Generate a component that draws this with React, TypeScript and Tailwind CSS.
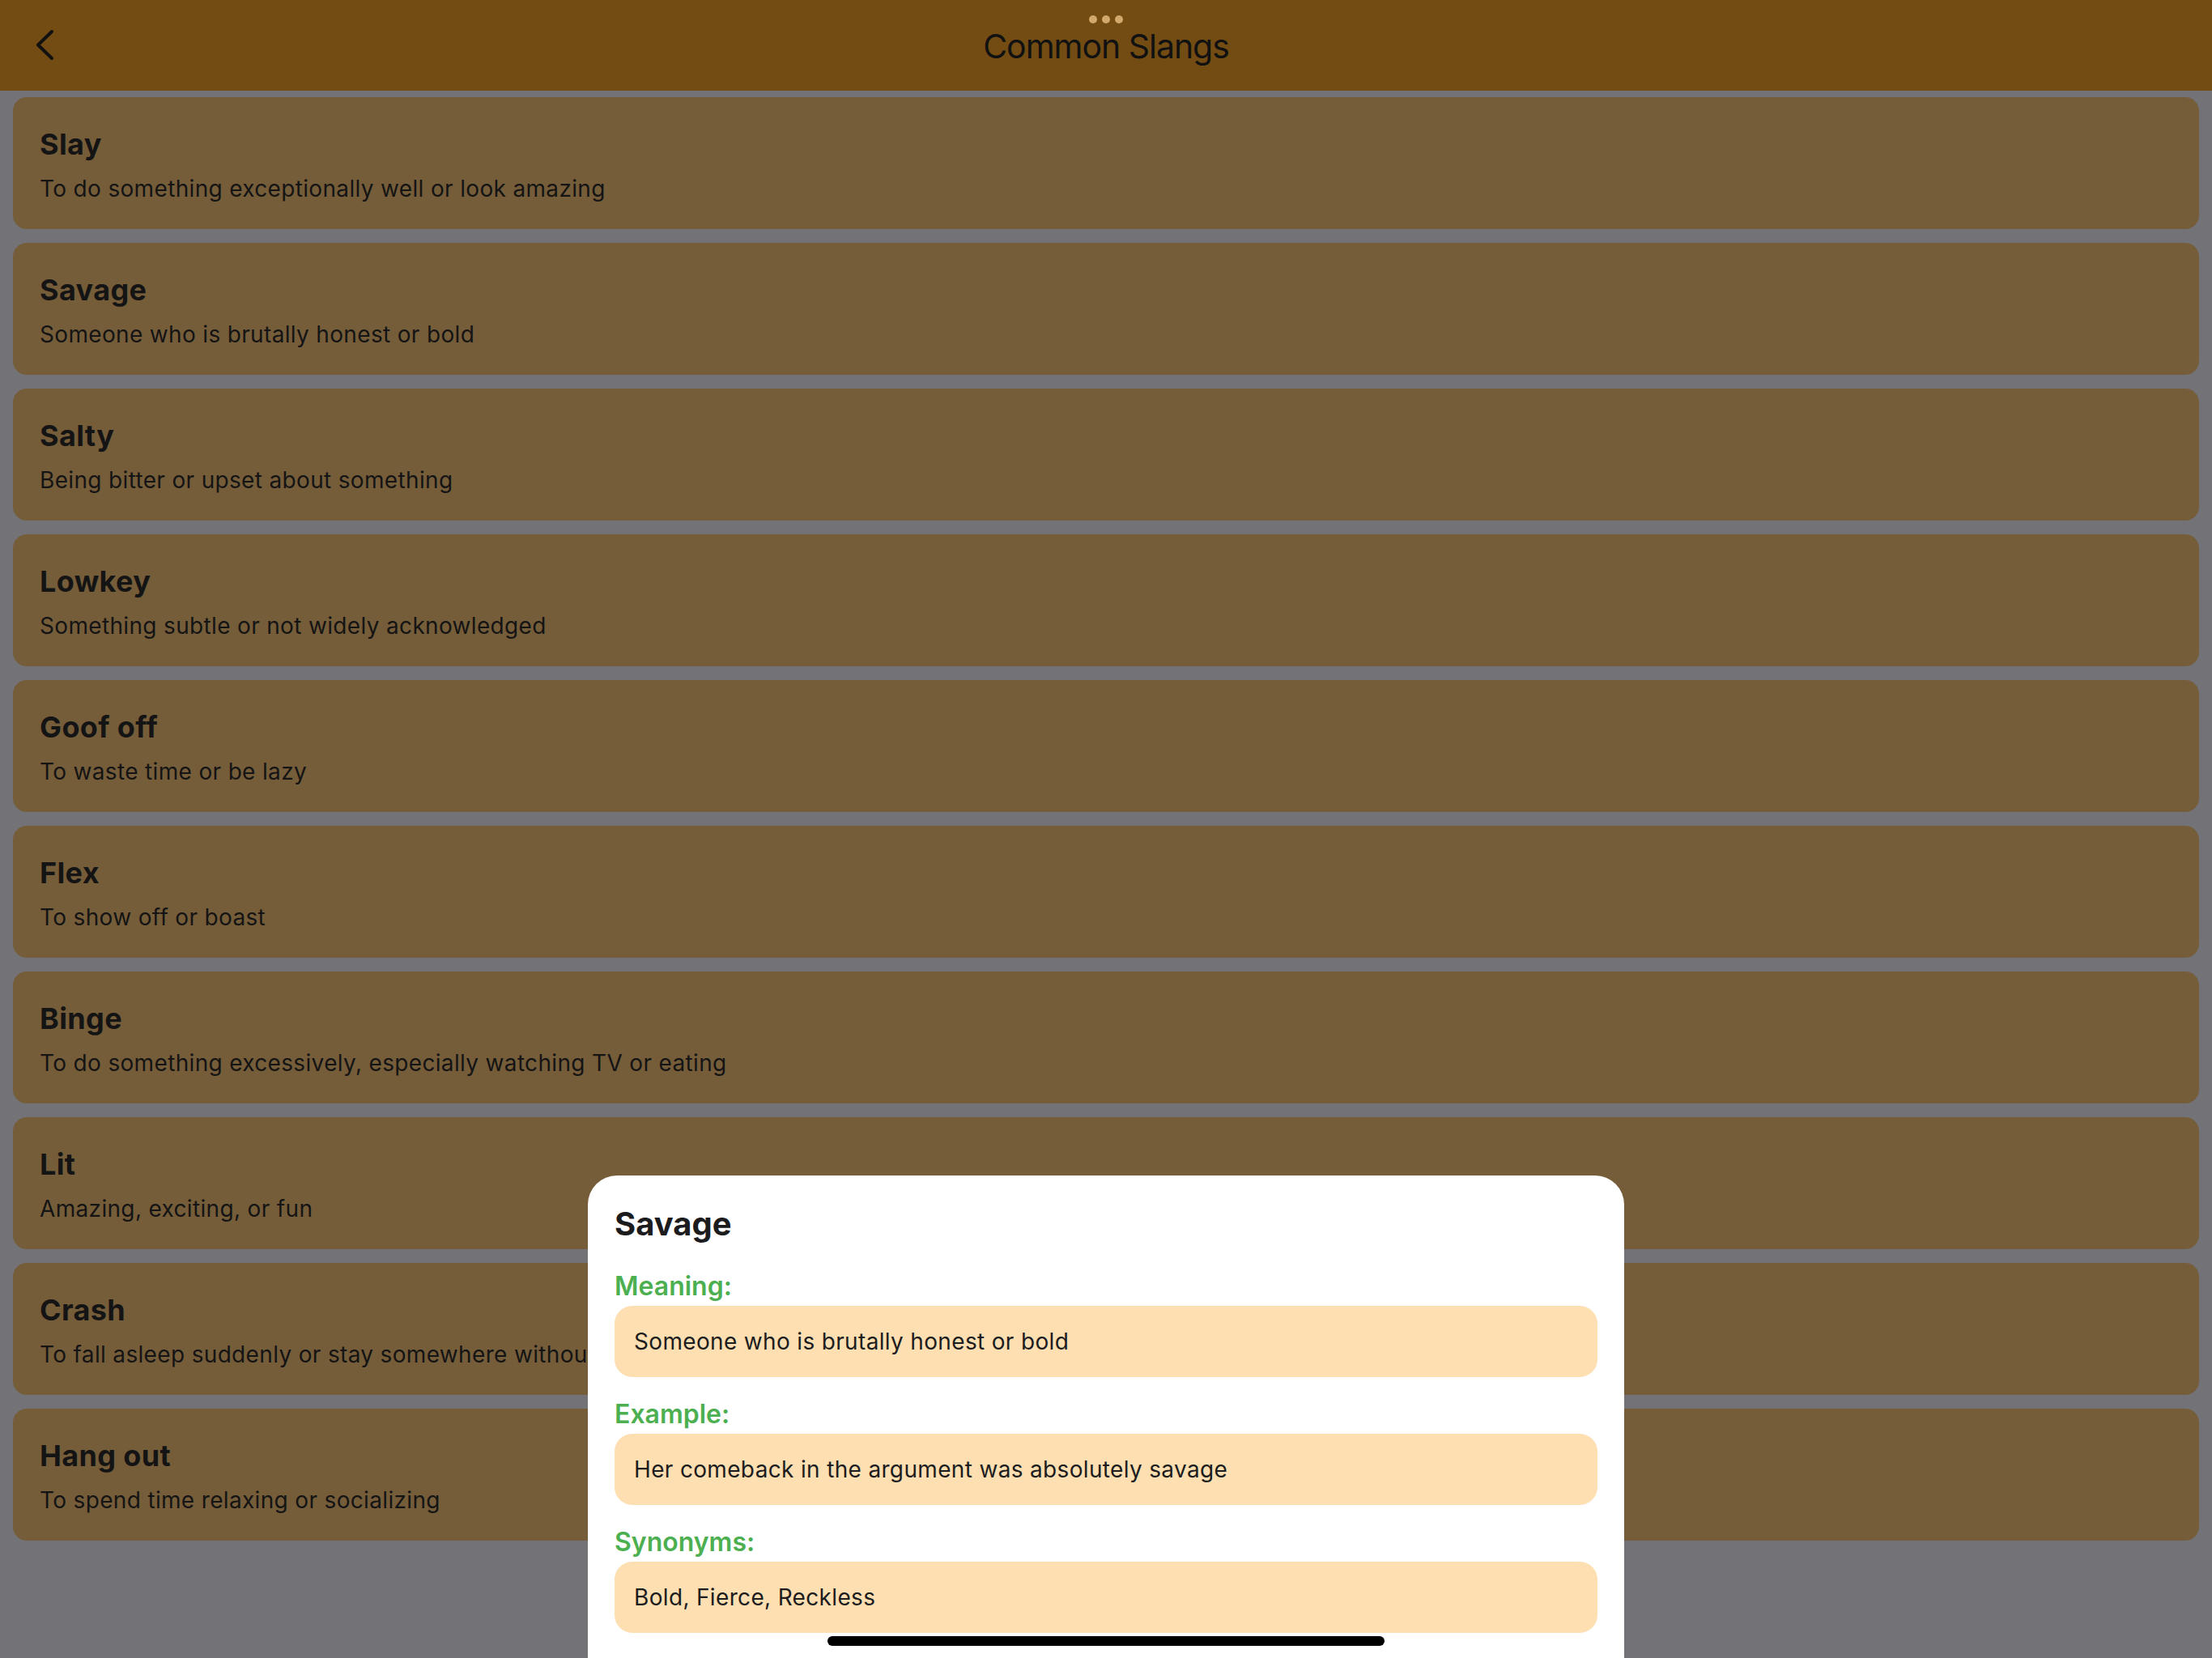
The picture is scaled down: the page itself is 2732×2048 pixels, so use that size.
type Slang = {
  word: string;
  meaning: string;
};

const slangs: Slang[] = [
  { word: "Slay", meaning: "To do something exceptionally well or look amazing" },
  { word: "Savage", meaning: "Someone who is brutally honest or bold" },
  { word: "Salty", meaning: "Being bitter or upset about something" },
  { word: "Lowkey", meaning: "Something subtle or not widely acknowledged" },
  { word: "Goof off", meaning: "To waste time or be lazy" },
  { word: "Flex", meaning: "To show off or boast" },
  { word: "Binge", meaning: "To do something excessively, especially watching TV or eating" },
  { word: "Lit", meaning: "Amazing, exciting, or fun" },
  { word: "Crash", meaning: "To fall asleep suddenly or stay somewhere without planning" },
  { word: "Hang out", meaning: "To spend time relaxing or socializing" },
];

const selected = {
  word: "Savage",
  meaning: "Someone who is brutally honest or bold",
  example: "Her comeback in the argument was absolutely savage",
  synonyms: "Bold, Fierce, Reckless",
};

function DetailSection({ label, value }: { label: string; value: string }) {
  return (
    <div className="flex flex-col">
      <div className="text-[32px] leading-[38px] font-semibold text-[#4caf50]">{label}</div>
      <div className="mt-[5px] h-[88px] rounded-[22px] bg-[#fddfb1] px-[24px] flex items-center">
        <span className="text-[28px] leading-[34px] tracking-[0.012em] text-[#1c1c1e]">{value}</span>
      </div>
    </div>
  );
}

export default function App() {
  return (
    <div
      className="relative w-[2732px] h-[2048px] overflow-hidden bg-[#737276]"
      style={{ fontFamily: "Inter, 'Noto Sans', sans-serif" }}
    >
      {/* Top bar */}
      <div className="relative h-[112px] bg-[#734c13] flex items-start justify-center">
        <svg
          className="absolute left-[40px] top-[32px] w-[32px] h-[48px]"
          viewBox="0 0 32 48"
          fill="none"
          stroke="#111111"
          strokeWidth={4}
          strokeLinecap="round"
          strokeLinejoin="round"
        >
          <polyline points="24,7 7,23.5 24,40" />
        </svg>
        <div className="flex flex-col items-center">
          <div className="mt-[19px] flex gap-[6px]">
            <span className="w-[10px] h-[10px] rounded-full bg-[#d3a86b]" />
            <span className="w-[10px] h-[10px] rounded-full bg-[#d3a86b]" />
            <span className="w-[10px] h-[10px] rounded-full bg-[#d3a86b]" />
          </div>
          <div className="mt-[3px] text-[41px] leading-[50px] tracking-[-0.025em] text-[#111111]">Common Slangs</div>
        </div>
      </div>

      {/* List */}
      <div className="pt-[8px] px-[16px] flex flex-col gap-[17px]">
        {slangs.map((s) => (
          <div key={s.word} className="h-[163px] rounded-[17px] bg-[#765d3a] px-[33px] pt-[36px]">
            <div className="text-[36px] leading-[44px] font-bold tracking-[0.01em] text-[#141414]">{s.word}</div>
            <div className="mt-[16px] text-[28px] leading-[34px] tracking-[0.012em] text-[#141414]">{s.meaning}</div>
          </div>
        ))}
      </div>

      {/* Bottom sheet */}
      <div className="absolute left-[726px] top-[1452px] bottom-0 w-[1280px] bg-white rounded-t-[36px] px-[33px] pt-[36px]">
        <div className="text-[40px] leading-[48px] font-bold text-[#1c1c1e]">{selected.word}</div>
        <div className="mt-[34px] flex flex-col gap-[27px]">
          <DetailSection label="Meaning:" value={selected.meaning} />
          <DetailSection label="Example:" value={selected.example} />
          <DetailSection label="Synonyms:" value={selected.synonyms} />
        </div>
        <div className="absolute bottom-[15px] left-1/2 -translate-x-1/2 w-[688px] h-[12px] rounded-full bg-black" />
      </div>
    </div>
  );
}
